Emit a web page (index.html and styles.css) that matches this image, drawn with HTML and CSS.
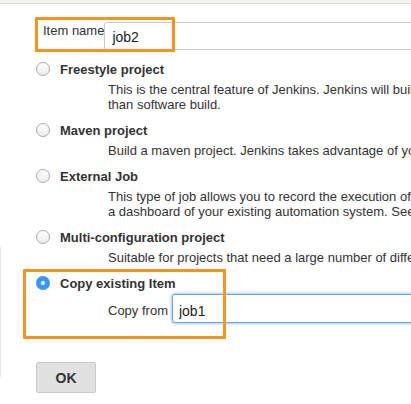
FILE: index.html
```html
<!DOCTYPE html>
<html>
<head>
<meta charset="utf-8">
<link rel="stylesheet" href="styles.css">
</head>
<body>
<div class="topbar"></div>
<div class="page">
  <div class="side-line"></div>
  <div class="name-row">
    <label class="name-label">Item name</label>
    <input class="text-input name-input" type="text" value="job2">
  </div>
  <div class="options">
    <div class="opt">
      <div class="opt-head"><span class="radio"></span><span class="opt-title">Freestyle project</span></div>
      <div class="opt-desc">This is the central feature of Jenkins. Jenkins will build your project, combining any SCM with any build system, and this can be even used for something other<br>than software build.</div>
    </div>
    <div class="opt">
      <div class="opt-head"><span class="radio"></span><span class="opt-title">Maven project</span></div>
      <div class="opt-desc">Build a maven project. Jenkins takes advantage of your POM files and drastically reduces the configuration.</div>
    </div>
    <div class="opt">
      <div class="opt-head"><span class="radio"></span><span class="opt-title">External Job</span></div>
      <div class="opt-desc">This type of job allows you to record the execution of a process run outside Jenkins, even on a remote machine.<br>a dashboard of your existing automation system. See the documentation for more details.</div>
    </div>
    <div class="opt">
      <div class="opt-head"><span class="radio"></span><span class="opt-title">Multi-configuration project</span></div>
      <div class="opt-desc">Suitable for projects that need a large number of different configurations, such as testing on multiple environments.</div>
    </div>
    <div class="opt opt-copy">
      <div class="opt-head"><span class="radio radio-on"></span><span class="opt-title">Copy existing Item</span></div>
      <div class="copy-row">
        <label class="copy-label">Copy from</label>
        <input class="text-input copy-input" type="text" value="job1">
      </div>
    </div>
  </div>
  <button class="ok-btn">OK</button>
  <div class="mark mark-name"></div>
  <div class="mark mark-copy"></div>
</div>
</body>
</html>
```
FILE: styles.css
```css
html, body {
  margin: 0;
  padding: 0;
  background: #fff;
  overflow: hidden;
}
body {
  width: 411px;
  height: 404px;
  font-family: "Liberation Sans", Arial, Helvetica, sans-serif;
  font-size: 13px;
  color: #333;
}
.topbar {
  height: 3px;
  background: #f4f4ef;
  border-bottom: 1px solid #dcdcdc;
}
.page {
  position: relative;
  height: 400px;
  padding-top: 18px;
  box-sizing: border-box;
  overflow: hidden;
}
.side-line {
  position: absolute;
  left: 0;
  top: 243px;
  width: 1px;
  height: 130px;
  background: #e6e6e6;
}
.name-row {
  display: flex;
  align-items: flex-start;
  margin-left: 43px;
  height: 28px;
}
.name-label {
  font-size: 13px;
  line-height: 15px;
  margin-top: 1px;
  width: 65px;
  white-space: nowrap;
}
.text-input {
  font-family: "Liberation Sans", Arial, Helvetica, sans-serif;
  font-size: 14px;
  color: #222;
  box-sizing: border-box;
  outline: none;
  background: #fff;
}
.name-input {
  flex: none;
  width: 320px;
  height: 28px;
  border: 1px solid #c9c9c9;
  border-radius: 3px 0 0 3px;
  padding: 1px 0 0 7px;
}
.options {
  margin: 11px 0 0 36px;
}
.opt {
  margin-bottom: 9.75px;
}
.opt-head {
  display: flex;
  align-items: center;
  height: 16px;
}
.radio {
  flex: none;
  width: 14px;
  height: 14px;
  box-sizing: border-box;
  border-radius: 50%;
  border: 1px solid #ababab;
  background: linear-gradient(#fdfdfd, #ececec);
  margin-right: 10px;
  position: relative;
}
.radio-on {
  border: none;
  background: #3a96f5;
}
.radio-on::after {
  content: "";
  position: absolute;
  left: 5px;
  top: 5px;
  width: 4px;
  height: 4px;
  border-radius: 50%;
  background: #fff;
}
.opt-title {
  font-weight: bold;
  font-size: 13px;
  white-space: nowrap;
}
.opt-desc {
  margin: 4.5px 0 0 72px;
  line-height: 15.5px;
  white-space: nowrap;
  width: 303px;
  overflow: hidden;
}
.opt-copy {
  margin-bottom: 0;
}
.copy-row {
  display: flex;
  align-items: center;
  margin: 3px 0 0 72px;
  height: 29px;
}
.copy-label {
  white-space: nowrap;
  margin: 4px 4px 0 0;
}
.copy-input {
  flex: none;
  width: 300px;
  height: 29px;
  border: 1px solid #6aa3e0;
  border-radius: 3px 0 0 3px;
  box-shadow: 0 0 3px 1px #a9cdf3;
  padding: 4px 0 0 6px;
}
.ok-btn {
  display: block;
  margin: 39px 0 0 36px;
  width: 60px;
  height: 31px;
  background: #e1e1e1;
  border: 1px solid #cbcbcb;
  border-radius: 2px;
  font-family: "Liberation Sans", Arial, Helvetica, sans-serif;
  font-weight: bold;
  font-size: 14px;
  color: #333;
  padding: 0;
}
.mark {
  position: absolute;
  border: 3px solid #f7941e;
  box-sizing: border-box;
  border-radius: 1px;
}
.mark-name {
  left: 35px;
  top: 13px;
  width: 140px;
  height: 35px;
}
.mark-copy {
  left: 23px;
  top: 265px;
  width: 203px;
  height: 70px;
}
```
